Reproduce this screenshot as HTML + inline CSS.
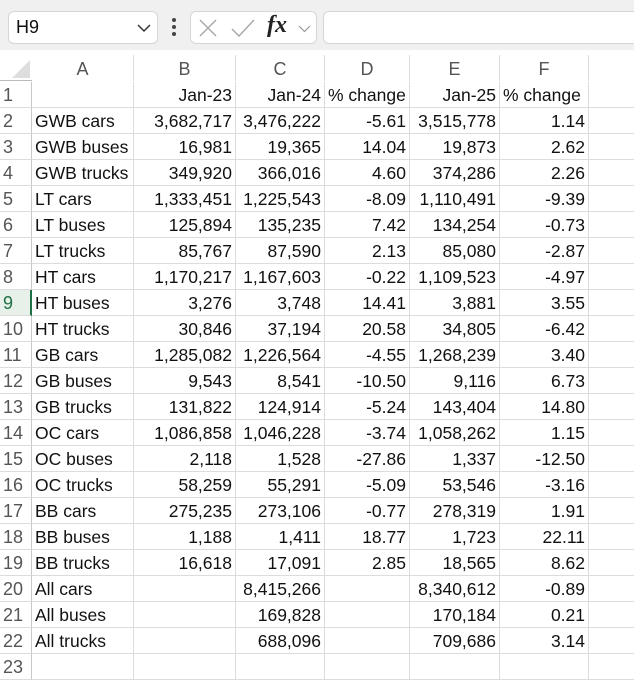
<!DOCTYPE html>
<html><head><meta charset="utf-8"><style>
*{margin:0;padding:0;box-sizing:border-box}
body{width:634px;height:671px;overflow:hidden;background:#fff;font-family:"Liberation Sans",sans-serif;position:relative}
.tb{position:absolute;left:0;top:0;width:634px;height:50px;background:#f0f0f0}
.box{position:absolute;top:11px;height:33px;background:#fff;border:1px solid #d6d6d6;border-radius:6px}
.c{position:absolute;height:26px;line-height:27px;font-size:17.5px;color:#111;white-space:nowrap;overflow:hidden;border-right:1px solid #dcdcdc;border-bottom:1px solid #dcdcdc;padding:0 3px}
.r{text-align:right}
.h{color:#555;text-align:center;font-size:18px;background:#fff;line-height:28px}
.rh{color:#555;font-size:18px;padding-left:3px;border-right:1px solid #c8c8c8}
</style></head><body>
<div class="tb"></div>
<div class="box" style="left:8px;width:150px"><span style="position:absolute;left:7px;top:5px;font-size:18px;color:#111">H9</span>
<svg style="position:absolute;left:128px;top:12px" width="14" height="9"><path d="M1 1 L7 7 L13 1" stroke="#333" stroke-width="1.5" fill="none"/></svg></div>
<div style="position:absolute;left:172px;top:18px;width:4px;height:4px;background:#444;border-radius:2px"></div>
<div style="position:absolute;left:172px;top:25px;width:4px;height:4px;background:#444;border-radius:2px"></div>
<div style="position:absolute;left:172px;top:32px;width:4px;height:4px;background:#444;border-radius:2px"></div>
<div class="box" style="left:190px;width:127px">
<svg style="position:absolute;left:8px;top:7px" width="18" height="18"><path d="M1 1 L17 17 M17 1 L1 17" stroke="#aaa" stroke-width="1.5"/></svg>
<svg style="position:absolute;left:40px;top:7px" width="24" height="18"><path d="M1 10 L8 17 L23 1" stroke="#aaa" stroke-width="1.5" fill="none"/></svg>
<span style="position:absolute;left:76px;top:0px;font-family:'Liberation Serif',serif;font-style:italic;font-weight:bold;font-size:24px;color:#222">fx</span>
<svg style="position:absolute;left:107px;top:13px" width="13" height="8"><path d="M1 1 L6.5 6.5 L12 1" stroke="#999" stroke-width="1.2" fill="none"/></svg>
</div>
<div class="box" style="left:323px;width:320px;border-radius:6px 0 0 6px"></div>
<div id="g"></div>
<script>
const xs=[0,32,134,236,325,410,500,589,700];
const heads=['','A','B','C','D','E','F','G'];
let h='';
h+='<div style="position:absolute;left:0;top:50px;width:634px;height:31px;background:#fff;border-bottom:1px solid #bbb"></div>';
h+='<svg style="position:absolute;left:12px;top:60px" width="18" height="18"><path d="M18 0 L18 18 L0 18Z" fill="#dedede"/></svg>';
for(let i=1;i<8;i++){h+=`<div class="c h" style="left:${xs[i]}px;top:55px;width:${xs[i+1]-xs[i]}px;border-bottom:none">${heads[i]}</div>`}
const d=[
['','Jan-23','Jan-24','% change','Jan-25','% change'],
['GWB cars','3,682,717','3,476,222','-5.61','3,515,778','1.14'],
['GWB buses','16,981','19,365','14.04','19,873','2.62'],
['GWB trucks','349,920','366,016','4.60','374,286','2.26'],
['LT cars','1,333,451','1,225,543','-8.09','1,110,491','-9.39'],
['LT buses','125,894','135,235','7.42','134,254','-0.73'],
['LT trucks','85,767','87,590','2.13','85,080','-2.87'],
['HT cars','1,170,217','1,167,603','-0.22','1,109,523','-4.97'],
['HT buses','3,276','3,748','14.41','3,881','3.55'],
['HT trucks','30,846','37,194','20.58','34,805','-6.42'],
['GB cars','1,285,082','1,226,564','-4.55','1,268,239','3.40'],
['GB buses','9,543','8,541','-10.50','9,116','6.73'],
['GB trucks','131,822','124,914','-5.24','143,404','14.80'],
['OC cars','1,086,858','1,046,228','-3.74','1,058,262','1.15'],
['OC buses','2,118','1,528','-27.86','1,337','-12.50'],
['OC trucks','58,259','55,291','-5.09','53,546','-3.16'],
['BB cars','275,235','273,106','-0.77','278,319','1.91'],
['BB buses','1,188','1,411','18.77','1,723','22.11'],
['BB trucks','16,618','17,091','2.85','18,565','8.62'],
['All cars','','8,415,266','','8,340,612','-0.89'],
['All buses','','169,828','','170,184','0.21'],
['All trucks','','688,096','','709,686','3.14'],
['','','','','','']];
for(let r=0;r<23;r++){const y=82+r*26;
 const sel=r==8;
 h+=`<div class="c rh" style="left:0;top:${y}px;width:32px;${sel?'color:#1e7145;background:#e8f0ea;border-right:2px solid #1e7145':''}">${r+1}</div>`;
 for(let c=0;c<7;c++){const t=c<6?d[r][c]:'';
  const right=(c>0&&!(r==0&&(c==3||c==5)));
  h+=`<div class="c${right?' r':''}" style="left:${xs[c+1]}px;top:${y}px;width:${xs[c+2]-xs[c+1]}px">${t}</div>`;}
}
document.getElementById('g').innerHTML=h;
</script>
</body></html>
